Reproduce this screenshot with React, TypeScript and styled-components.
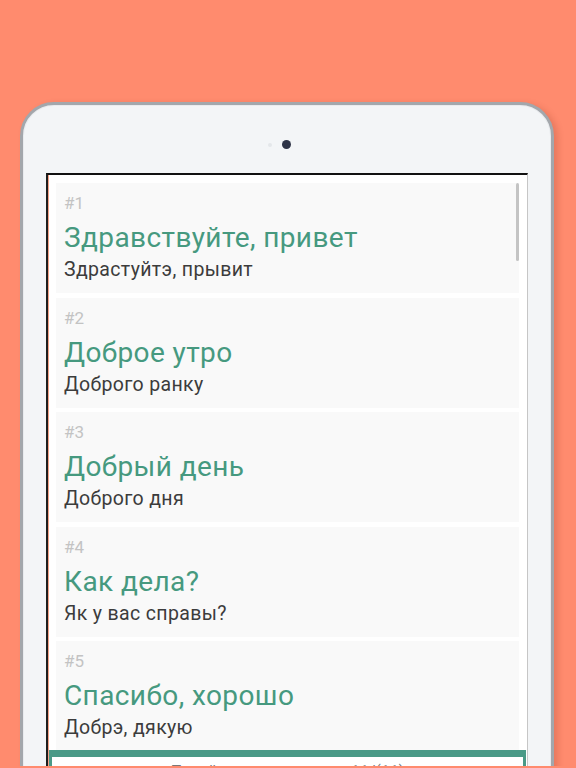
import React from 'react'
import styled, { createGlobalStyle } from 'styled-components'

const GlobalStyle = createGlobalStyle`
  html, body {
    margin: 0;
    padding: 0;
    background-color: #ff8b6e;
  }
  * {
    box-sizing: border-box;
  }
`;

const StyledPage = styled.div`
  width: 576px;
  height: 766px;
  overflow: hidden;
  padding: 102px 22px 0 20px;
  font-family: Roboto, "Noto Sans", sans-serif;
`;

const StyledTablet = styled.div`
  position: relative;
  width: 534px;
  height: 720px;
  border-radius: 34px;
  background-color: #f3f5f7;
  border: 3px solid #a3a7ac;
  box-shadow: inset 0 0 0 1px #e9ebee, 4px 2px 6px rgba(120, 40, 20, 0.18);
  padding: 68px 23px 0 23px;
`;

const StyledCameraRow = styled.div`
  position: absolute;
  top: 35px;
  left: 0;
  right: 0;
  display: flex;
  justify-content: center;
  align-items: center;
  gap: 10px;
  padding-left: 2px;
`;

const StyledSensor = styled.div`
  width: 4px;
  height: 4px;
  border-radius: 50%;
  background-color: #e4e7ea;
  margin-left: -18px;
`;

const StyledCamera = styled.div`
  width: 9px;
  height: 9px;
  border-radius: 50%;
  background-color: #2e3447;
`;

const StyledScreen = styled.div`
  position: relative;
  display: flex;
  flex-direction: column;
  width: 482px;
  height: 640px;
  background-color: #ffffff;
  border-top: 2px solid #111111;
  border-left: 2px solid #1e1e1e;
  border-right: 1px solid #c6c6c6;
  box-shadow: inset 1px 0 0 #f3a288;
`;

const StyledList = styled.div`
  display: flex;
  flex-direction: column;
  gap: 4.5px;
  height: 575px;
  padding: 8px 8px 0 8px;
  overflow: hidden;
`;

const StyledScrollbar = styled.div`
  position: absolute;
  top: 8px;
  right: 8px;
  width: 3px;
  height: 78px;
  border-radius: 2px;
  background-color: #c4c4c4;
`;

const StyledCard = styled.div`
  display: flex;
  flex-direction: column;
  flex-shrink: 0;
  height: 110px;
  padding: 10px 8px 9px 8px;
  background-color: #f9f9f9;
`;

const StyledNumber = styled.div`
  height: 20px;
  font-size: 17px;
  line-height: 20px;
  color: #c3c3c3;
`;

const StyledPhrase = styled.div`
  margin-top: 7px;
  height: 36px;
  font-size: 28px;
  line-height: 36px;
  letter-spacing: 0.4px;
  color: #46997f;
  white-space: nowrap;
`;

const StyledTranslation = styled.div`
  height: 28px;
  font-size: 19.5px;
  line-height: 28px;
  letter-spacing: 0.35px;
  color: #3c3c3c;
  white-space: nowrap;
`;

const StyledFooter = styled.div`
  display: flex;
  justify-content: center;
  margin: 0 1px;
  height: 48px;
  border-top: 7px solid #4a9a87;
  border-left: 3px solid #4a9a87;
  border-right: 3px solid #4a9a87;
  background-color: #ffffff;
`;

const StyledFooterText = styled.div`
  margin-top: 5px;
  font-size: 16px;
  line-height: 20px;
  color: #7a7a7a;
`;

interface Phrase {
  text: string;
  translation: string;
}

const phrases: Phrase[] = [
  { text: 'Здравствуйте, привет', translation: 'Здрастуйтэ, прывит' },
  { text: 'Доброе утро', translation: 'Доброго ранку' },
  { text: 'Добрый день', translation: 'Доброго дня' },
  { text: 'Как дела?', translation: 'Як у вас справы?' },
  { text: 'Спасибо, хорошо', translation: 'Добрэ, дякую' },
  { text: 'До свидания', translation: 'До побачэння' },
];

const App: React.FC = () => {
  return (
    <StyledPage>
      <GlobalStyle />
      <StyledTablet>
        <StyledCameraRow>
          <StyledSensor />
          <StyledCamera />
        </StyledCameraRow>
        <StyledScreen>
          <StyledList>
            {phrases.map((p, i) => (
              <StyledCard key={i}>
                <StyledNumber>#{i + 1}</StyledNumber>
                <StyledPhrase>{p.text}</StyledPhrase>
                <StyledTranslation>{p.translation}</StyledTranslation>
              </StyledCard>
            ))}
          </StyledList>
          <StyledScrollbar />
          <StyledFooter>
            <StyledFooterText>Перейти к упражнению 11/(11)</StyledFooterText>
          </StyledFooter>
        </StyledScreen>
      </StyledTablet>
    </StyledPage>
  )
}

export default App
